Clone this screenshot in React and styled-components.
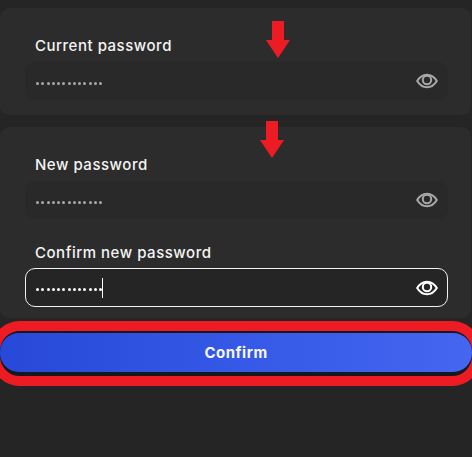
import React from 'react'
import styled, { createGlobalStyle } from 'styled-components'

const Global = createGlobalStyle`
    html, body {
        margin: 0;
        background: #252525;
        overflow: hidden;
    }
    * {
        box-sizing: border-box;
    }
`

const Page = styled.main`
    position: relative;
    width: 472px;
    height: 457px;
    padding-top: 8px;
    overflow: hidden;
    background: #252525;
    font-family: Inter, "Noto Sans", sans-serif;
    color: #f4f4f4;
`

const TopCard = styled.section`
    width: 471px;
    height: 107px;
    padding: 29px 23px 0 25px;
    background: #2c2c2c;
    border-radius: 9px;
`

const BottomCard = styled.section`
    width: 471px;
    height: 191px;
    margin-top: 12px;
    padding: 29px 23px 0 25px;
    background: #2c2c2c;
    border-radius: 9px;
`

const Field = styled.div`
    margin-bottom: 25px;
`

const Label = styled.label`
    display: block;
    height: 25px;
    padding-left: 10px;
    font-size: 15px;
    font-weight: 500;
    letter-spacing: 0.52px;
    line-height: 18px;
`

const InputBox = styled.div`
    display: flex;
    align-items: center;
    justify-content: space-between;
    height: ${({ $active }) => ($active ? '39px' : '38px')};
    margin-top: ${({ $active }) => ($active ? '-1px' : '0')};
    padding: 0 9px 0 10px;
    background: ${({ $active }) => ($active ? '#252525' : '#292929')};
    border: 1px solid ${({ $active }) => ($active ? '#f2f2f2' : '#292929')};
    border-radius: 10px;
    color: ${({ $active }) => ($active ? '#ffffff' : '#a8a8a8')};
`

const Dots = styled.span`
    display: flex;
    align-items: center;
    gap: 2.25px;
    height: 20px;
`

const Dot = styled.i`
    display: block;
    width: 3px;
    height: 3px;
    margin-top: 4px;
    border-radius: 50%;
    background: currentColor;
`

const Caret = styled.span`
    width: 1px;
    height: 20px;
    margin-left: -2px;
    background: #ffffff;
`

const EyeIcon = styled.svg`
    width: 22px;
    height: 22px;
    fill: none;
    stroke: currentColor;
    stroke-width: 2;
`

const ConfirmRing = styled.div`
    width: 492px;
    height: 65px;
    margin: 3px 0 0 -10px;
    padding: 2px 0 4px;
    background: #14181f;
    border: 10px solid #ed1c24;
    border-radius: 30px;
`

const ConfirmButton = styled.button`
    display: block;
    width: 100%;
    height: 100%;
    padding: 0;
    border: 0;
    border-radius: 19px;
    background: linear-gradient(90deg, #2849d8 0%, #3558e6 50%, #4466f0 100%);
    color: #f6f8ff;
    font-family: inherit;
    font-size: 15px;
    font-weight: 700;
    letter-spacing: 0.5px;
`

const Arrow = styled.svg`
    position: absolute;
    left: ${({ $x }) => $x}px;
    top: ${({ $y }) => $y}px;
    width: 24px;
    height: 37px;
    fill: #ed1c24;
`

const Eye = () => (
    <EyeIcon viewBox="0 0 22 22">
        <path d="M1.2 11c2.5-4.2 5.8-6.3 9.8-6.3s7.3 2.1 9.8 6.3c-2.5 4.2-5.8 6.3-9.8 6.3s-7.3-2.1-9.8-6.3z" />
        <circle cx="11" cy="10" r="4.2" />
    </EyeIcon>
)

const PasswordField = ({ label, active }) => (
    <Field>
        <Label>{label}</Label>
        <InputBox $active={active}>
            <Dots>
                {Array.from({ length: 13 }).map((_, i) => <Dot key={i} />)}
                {active && <Caret />}
            </Dots>
            <Eye />
        </InputBox>
    </Field>
)

const ArrowDown = ({ x, y }) => (
    <Arrow $x={x} $y={y} viewBox="0 0 24 37">
        <path d="M6 0h12v19h6L12 37 0 19h6z" />
    </Arrow>
)

const App = () => {
    return (
        <Page>
            <Global />
            <TopCard>
                <PasswordField label="Current password" />
            </TopCard>
            <BottomCard>
                <PasswordField label="New password" />
                <PasswordField label="Confirm new password" active />
            </BottomCard>
            <ConfirmRing>
                <ConfirmButton>Confirm</ConfirmButton>
            </ConfirmRing>
            <ArrowDown x={266} y={21} />
            <ArrowDown x={260} y={121} />
        </Page>
    )
}

export default App
